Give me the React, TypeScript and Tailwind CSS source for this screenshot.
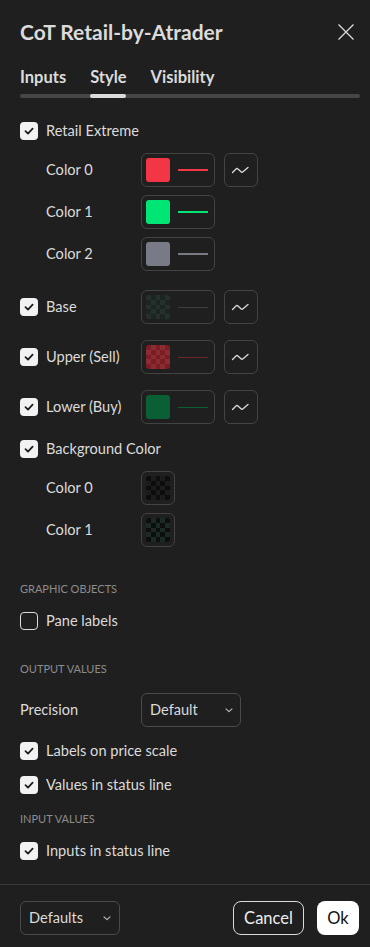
import * as React from "react";

// Small helpers for the style tab of an indicator settings dialog

function Check({ checked = true }: { checked?: boolean }) {
  if (!checked) {
    return <span className="w-[18px] h-[18px] rounded-[4px] border border-[#dbdbdb] shrink-0" />;
  }
  return (
    <span className="w-[18px] h-[18px] rounded-[4px] bg-[#f2f2f2] shrink-0 flex items-center justify-center">
      <svg width="12" height="12" viewBox="0 0 12 12" fill="none">
        <path d="M2.5 6.2 L5 8.6 L9.6 3.6" stroke="#1e1e1e" strokeWidth="1.8" strokeLinecap="round" strokeLinejoin="round" />
      </svg>
    </span>
  );
}

function Checker({ a, b }: { a: string; b: string }) {
  // 5x5 checkerboard used for semi-transparent colours
  return (
    <div className="w-6 h-6 rounded-[3px] overflow-hidden grid grid-cols-5 grid-rows-5">
      {Array.from({ length: 25 }).map((_, i) => {
        const even = (Math.floor(i / 5) + (i % 5)) % 2 === 0;
        return <div key={i} style={{ background: even ? a : b }} />;
      })}
    </div>
  );
}

function Swatch({ color, checker }: { color?: string; checker?: [string, string] }) {
  if (checker) return <Checker a={checker[0]} b={checker[1]} />;
  return <div className="w-6 h-6 rounded-[3px]" style={{ background: color }} />;
}

function ColorButton({
  color,
  checker,
  line,
  thin,
}: {
  color?: string;
  checker?: [string, string];
  line: string;
  thin?: boolean;
}) {
  return (
    <div className="w-[74px] h-[34px] rounded-[6px] border border-[#434343] flex items-center pl-[4px] gap-2">
      <Swatch color={color} checker={checker} />
      <div className={thin ? "w-[30px] h-px" : "w-[30px] h-[2px]"} style={{ background: line }} />
    </div>
  );
}

function WaveButton() {
  return (
    <div className="w-[34px] h-[34px] rounded-[6px] border border-[#434343] flex items-center justify-center ml-[9px]">
      <svg width="20" height="12" viewBox="0 0 20 12" fill="none">
        <path
          d="M1.5 8.5 L5 5 Q6 4 7 5 L10 7.8 Q11 8.7 12 7.8 L17 3.5"
          stroke="#dbdbdb"
          strokeWidth="1.3"
          strokeLinecap="round"
          strokeLinejoin="round"
        />
      </svg>
    </div>
  );
}

function SubRow({ label, children, className = "" }: { label: string; children: React.ReactNode; className?: string }) {
  return (
    <div className={"flex items-center h-[34px] " + className}>
      <div className="w-[121px] pl-[26px] shrink-0">{label}</div>
      {children}
    </div>
  );
}

function CheckRow({ label, checked = true, className = "" }: { label: string; checked?: boolean; className?: string }) {
  return (
    <div className={"flex items-center h-6 gap-2 " + className}>
      <Check checked={checked} />
      <span>{label}</span>
    </div>
  );
}

function PlotRow({ label, children, className = "" }: { label: string; children: React.ReactNode; className?: string }) {
  return (
    <div className={"flex items-center h-[34px] " + className}>
      <div className="w-[121px] shrink-0 flex items-center gap-2">
        <Check />
        <span>{label}</span>
      </div>
      {children}
      <WaveButton />
    </div>
  );
}

function SectionTitle({ children, className = "" }: { children: React.ReactNode; className?: string }) {
  return <div className={"h-4 text-[11px] leading-4 uppercase text-[#8c8c8c] " + className}>{children}</div>;
}

function Chevron() {
  return (
    <svg width="12" height="12" viewBox="0 0 12 12" fill="none">
      <path d="M3 4.8 L6 7.6 L9 4.8" stroke="#bdbdbd" strokeWidth="1.1" strokeLinecap="round" strokeLinejoin="round" />
    </svg>
  );
}

export default function App() {
  return (
    <div className="w-[370px] h-[947px] bg-[#1f1f1f] text-[#dbdbdb] text-[14.6px] flex flex-col font-['Lato',sans-serif]">
      {/* header */}
      <div className="pl-5 pr-[10px] pt-5">
        <div className="flex items-center justify-between h-6">
          <div className="text-[21px] font-bold leading-6">CoT Retail-by-Atrader</div>
          <svg width="18" height="18" viewBox="0 0 18 18" fill="none" className="mr-[5px]">
            <path d="M1.5 1.5 L16.5 16.5 M16.5 1.5 L1.5 16.5" stroke="#dbdbdb" strokeWidth="1.3" />
          </svg>
        </div>
        <div className="flex gap-6 mt-[21px] h-6 items-center text-[16.5px] font-bold">
          <span>Inputs</span>
          <span>Style</span>
          <span>Visibility</span>
        </div>
        <div className="mt-[5px] h-1 rounded-full bg-[#474747] relative">
          <div className="absolute left-[70px] top-0 h-1 w-[36px] rounded-full bg-[#dbdbdb]" />
        </div>
      </div>

      {/* body */}
      <div className="px-5 flex flex-col">
        <CheckRow label="Retail Extreme" className="mt-[21px]" />
        <SubRow label="Color 0" className="mt-[10px]">
          <ColorButton color="#f23645" line="#f23645" />
          <WaveButton />
        </SubRow>
        <SubRow label="Color 1" className="mt-2">
          <ColorButton color="#00e676" line="#00e676" />
        </SubRow>
        <SubRow label="Color 2" className="mt-2">
          <ColorButton color="#787b86" line="#787b86" />
        </SubRow>

        <PlotRow label="Base" className="mt-[19px]">
          <ColorButton checker={["#26302c", "#1d2522"]} line="#3a3f3d" thin />
        </PlotRow>
        <PlotRow label="Upper (Sell)" className="mt-4">
          <ColorButton checker={["#7b1d25", "#8b2c33"]} line="#6e262c" thin />
        </PlotRow>
        <PlotRow label="Lower (Buy)" className="mt-4">
          <ColorButton color="#0b5f35" line="#0b5f35" thin />
        </PlotRow>

        <CheckRow label="Background Color" className="mt-[13px]" />
        <SubRow label="Color 0" className="mt-[10px]">
          <div className="w-[34px] h-[34px] rounded-[6px] border border-[#434343] flex items-center justify-center">
            <Checker a="#0d0d0b" b="#1c1c1c" />
          </div>
        </SubRow>
        <SubRow label="Color 1" className="mt-2">
          <div className="w-[34px] h-[34px] rounded-[6px] border border-[#434343] flex items-center justify-center">
            <Checker a="#0d0f0d" b="#1c2a27" />
          </div>
        </SubRow>

        <SectionTitle className="mt-[34px]">Graphic objects</SectionTitle>
        <CheckRow label="Pane labels" checked={false} className="mt-3" />

        <SectionTitle className="mt-7">Output values</SectionTitle>
        <div className="flex items-center h-[34px] mt-4">
          <div className="w-[121px] shrink-0">Precision</div>
          <div className="w-[100px] h-[34px] rounded-[6px] border border-[#4a4a4a] flex items-center justify-between pl-2 pr-[5px]">
            <span>Default</span>
            <Chevron />
          </div>
        </div>
        <CheckRow label="Labels on price scale" className="mt-3" />
        <CheckRow label="Values in status line" className="mt-[10px]" />
        <SectionTitle className="mt-[14px]">Input values</SectionTitle>
        <CheckRow label="Inputs in status line" className="mt-3" />
      </div>

      {/* footer */}
      <div className="mt-auto border-t border-[#3a3a3a] pl-5 pr-[11px] pt-4 pb-[12px] flex items-center justify-between">
        <div className="w-[100px] h-[34px] rounded-[6px] border border-[#4a4a4a] flex items-center justify-between pl-2 pr-[6px]">
          <span>Defaults</span>
          <Chevron />
        </div>
        <div className="flex items-center gap-[13px]">
          <button className="h-[34px] w-[71px] rounded-[8px] border border-[#dbdbdb] text-[16.5px] text-[#eeeeee]">Cancel</button>
          <button className="h-[34px] w-[42px] rounded-[8px] bg-white text-[16.5px] text-[#111111]">Ok</button>
        </div>
      </div>
    </div>
  );
}
